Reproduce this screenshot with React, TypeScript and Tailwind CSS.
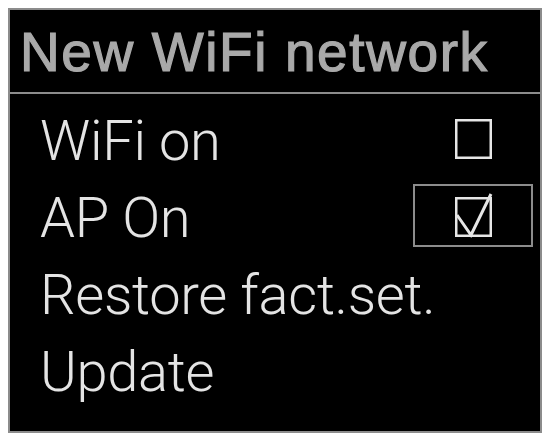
import React from 'react';

const CheckBox = ({ checked }: { checked: boolean }) => (
  <svg width="37" height="40" viewBox="0 0 37 40" className="overflow-visible">
    <rect x="1.25" y="1.25" width="34.5" height="37.5" fill="none" stroke="#e6e6e6" strokeWidth="2.5" />
    {checked && (
      <path d="M2 18 L16 38 L36 -3" fill="none" stroke="#e6e6e6" strokeWidth="3" strokeLinejoin="miter" />
    )}
  </svg>
);

const App = () => {
  const items = [
    { label: 'WiFi on', check: false, selected: false },
    { label: 'AP On', check: true, selected: true },
    { label: 'Restore fact.set.' },
    { label: 'Update' },
  ];

  return (
    <div className="w-[550px] h-[440px] bg-white p-[8px]">
      <div className="w-[534px] h-[425px] bg-black border-2 border-[#8c8c8c] flex flex-col">
        <div className="h-[84px] border-b-2 border-[#8c8c8c] pl-[10px] pt-[15px]">
          <div
            className="text-[55px] leading-[55px] tracking-[1.6px] text-[#a9a9a9] [-webkit-text-stroke:1.2px_#a9a9a9]"
            style={{ fontFamily: '"Liberation Sans", Arial, sans-serif' }}
          >
            New WiFi network
          </div>
        </div>
        <div className="pt-[9px] flex flex-col">
          {items.map((item, i) => (
            <div key={i} className="h-[77px] flex items-center">
              <div
                className="flex-1 pl-[30px] text-[56px] leading-[77px] font-light tracking-[-0.3px] text-[#e4e4e4]"
                style={{ fontFamily: 'Roboto, "Liberation Sans", sans-serif' }}
              >
                {item.label}
              </div>
              {item.check !== undefined && (
                <div
                  className={
                    item.selected
                      ? 'w-[120px] h-[63px] mr-[7px] mb-[6px] border-2 border-[#8c8c8c] flex items-center justify-center pt-[2px]'
                      : 'w-[120px] h-[63px] mr-[7px] mb-[6px] border-2 border-transparent flex items-center justify-center'
                  }
                >
                  <CheckBox checked={item.check} />
                </div>
              )}
            </div>
          ))}
        </div>
      </div>
    </div>
  );
};

export default App;
